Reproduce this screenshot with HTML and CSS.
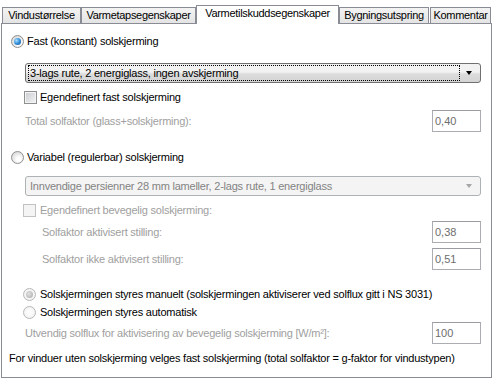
FILE: index.html
```html
<!DOCTYPE html>
<html lang="no">
<head>
    <meta charset="UTF-8">
    <title>Varmetilskuddsegenskaper</title>
    <link rel="stylesheet" href="styles.css">
</head>
<body>
    <div class="tabs">
        <div class="tab tab-size">Vindustørrelse</div>
        <div class="tab tab-loss">Varmetapsegenskaper</div>
        <div class="tab tab-gain active">Varmetilskuddsegenskaper</div>
        <div class="tab tab-out">Bygningsutspring</div>
        <div class="tab tab-note">Kommentar</div>
    </div>

    <div class="panel">
        <div class="option opt-fixed">
            <span class="radio checked"></span>
            <span>Fast (konstant) solskjerming</span>
        </div>

        <div class="combo combo-fixed">
            <span class="combo-text focus">3-lags rute, 2 energiglass, ingen avskjerming</span>
            <span class="arrow"></span>
        </div>

        <div class="option opt-check1">
            <span class="check"></span>
            <span>Egendefinert fast solskjerming</span>
        </div>

        <div class="field field-total">
            <span class="muted">Total solfaktor (glass+solskjerming):</span>
            <input class="num" type="text" value="0,40" readonly>
        </div>

        <div class="option opt-var">
            <span class="radio"></span>
            <span>Variabel (regulerbar) solskjerming</span>
        </div>

        <div class="combo combo-var disabled">
            <span class="combo-text">Innvendige persienner 28 mm lameller, 2-lags rute, 1 energiglass</span>
            <span class="arrow"></span>
        </div>

        <div class="option opt-check2 muted">
            <span class="check disabled"></span>
            <span>Egendefinert bevegelig solskjerming:</span>
        </div>

        <div class="field field-sub field-active">
            <span class="muted">Solfaktor aktivisert stilling:</span>
            <input class="num" type="text" value="0,38" readonly>
        </div>

        <div class="field field-sub field-idle">
            <span class="muted">Solfaktor ikke aktivisert stilling:</span>
            <input class="num" type="text" value="0,51" readonly>
        </div>

        <div class="option opt-manual">
            <span class="radio checked disabled"></span>
            <span>Solskjermingen styres manuelt (solskjermingen aktiviserer ved solflux gitt i NS 3031)</span>
        </div>

        <div class="option opt-auto">
            <span class="radio disabled"></span>
            <span>Solskjermingen styres automatisk</span>
        </div>

        <div class="field field-flux">
            <span class="muted">Utvendig solflux for aktivisering av bevegelig solskjerming [W/m²]:</span>
            <input class="num" type="text" value="100" readonly>
        </div>

        <div class="note">For vinduer uten solskjerming velges fast solskjerming (total solfaktor = g-faktor for vindustypen)</div>
    </div>
</body>
</html>
```

FILE: styles.css
```css
body {
    margin: 0;
    font-family: "Liberation Sans", Arial, sans-serif;
    font-size: 11px;
    letter-spacing: -0.22px;
    color: #000;
    background: #fff;
}

/* tab strip */
.tabs {
    display: flex;
    align-items: flex-end;
    height: 23px;
    padding-left: 2px;
}

.tab {
    box-sizing: border-box;
    height: 16px;
    border: 1px solid #898c95;
    border-bottom: none;
    background: linear-gradient(#f3f3f3, #e4e4e4);
    text-align: center;
    line-height: 15px;
    white-space: nowrap;
    letter-spacing: -0.3px;
}

.tab.active {
    position: relative;
    z-index: 1;
    height: 19px;
    margin-bottom: -1px;
    background: #fff;
    line-height: 15px;
}

.tab-size { width: 79px; }
.tab-loss { width: 115px; }
.tab-gain { width: 143px; }
.tab-out { width: 90px; margin-right: 1px; }
.tab-note { width: 61px; }

/* page */
.panel {
    box-sizing: border-box;
    width: 491px;
    height: 355px;
    margin-left: 1px;
    border: 1px solid #898c95;
    display: flex;
    flex-direction: column;
}

.option {
    display: flex;
    align-items: center;
    gap: 3px;
    height: 18px;
    white-space: nowrap;
}

.opt-fixed { margin-top: 8px; padding-left: 9px; }
.opt-check1 { margin-top: 6px; height: 16px; padding-left: 22px; }
.opt-var { margin-top: 16px; padding-left: 9px; }
.opt-check2 { margin-top: 6px; height: 16px; padding-left: 21px; }
.opt-check2 span + span { margin-left: 1px; }
.opt-manual { margin-top: 15px; padding-left: 21px; gap: 4px; }
.opt-auto { padding-left: 21px; gap: 4px; }

.radio {
    box-sizing: border-box;
    flex: none;
    width: 13px;
    height: 13px;
    border-radius: 50%;
    border: 1px solid #8e8f8f;
    background: radial-gradient(circle at 60% 65%, #ffffff 20%, #e4e4e4 60%, #cfcfcf);
    display: flex;
    align-items: center;
    justify-content: center;
}

.radio.checked::after {
    content: "";
    width: 7px;
    height: 7px;
    border-radius: 50%;
    background: radial-gradient(circle at 35% 35%, #a8e0ff, #2b86d4 55%, #154c8f);
}

.radio.disabled {
    border-color: #b8b8b8;
    background: radial-gradient(circle, #fbfbfb 30%, #ececec);
}

.radio.checked.disabled::after {
    background: radial-gradient(circle at 40% 40%, #e2e2e2, #a9a9a9);
}

.check {
    box-sizing: border-box;
    flex: none;
    width: 13px;
    height: 13px;
    border: 1px solid #8e8f8f;
    box-shadow: inset 0 0 0 1px #f4f4f4;
    background: linear-gradient(135deg, #c9ccd1, #f4f4f4);
}

.check.disabled {
    border-color: #c2c2c2;
    box-shadow: none;
    background: #f4f4f4;
}

/* drop-downs */
.combo {
    box-sizing: border-box;
    height: 20px;
    margin: 0 10px 0 23px;
    border: 1px solid #707070;
    border-radius: 3px;
    background: linear-gradient(#f2f2f2 45%, #dcdcdc 55%, #d4d4d4);
    display: flex;
    align-items: center;
    padding: 0 8px 0 2px;
    gap: 6px;
    white-space: nowrap;
}

.combo-fixed { margin-top: 13px; }
.combo-var { margin-top: 10px; }

.combo-text {
    flex: 1;
    line-height: 14px;
    padding-left: 1px;
    border: 1px dotted transparent;
}

.combo-text.focus {
    border-color: #000;
}

.arrow {
    width: 0;
    height: 0;
    border-left: 3.5px solid transparent;
    border-right: 3.5px solid transparent;
    border-top: 4px solid #000;
}

.combo.disabled {
    border-color: #adb2b5;
    background: #f4f4f4;
    color: #838383;
}

.combo.disabled .arrow {
    border-top-color: #a6a6a6;
}

/* label + number rows */
.field {
    display: flex;
    align-items: center;
    justify-content: space-between;
    height: 22px;
    margin: 0 10px 0 23px;
    white-space: nowrap;
}

.field-sub { padding-left: 17px; }
.field-total { margin-top: 5px; }
.field-active { margin-top: 3px; }
.field-idle { margin-top: 5px; }
.field-flux { margin-top: 1px; }

.muted {
    color: #a0a0a0;
}

.num {
    box-sizing: border-box;
    width: 49px;
    height: 22px;
    margin: 0;
    padding: 0 2px;
    border: 1px solid #abadb3;
    border-top-color: #9a9ca2;
    font: inherit;
    color: #6d6d6d;
    background: #fff;
    outline: none;
}

.note {
    margin-top: 6px;
    height: 16px;
    line-height: 16px;
    padding-left: 7px;
    white-space: nowrap;
}
```
